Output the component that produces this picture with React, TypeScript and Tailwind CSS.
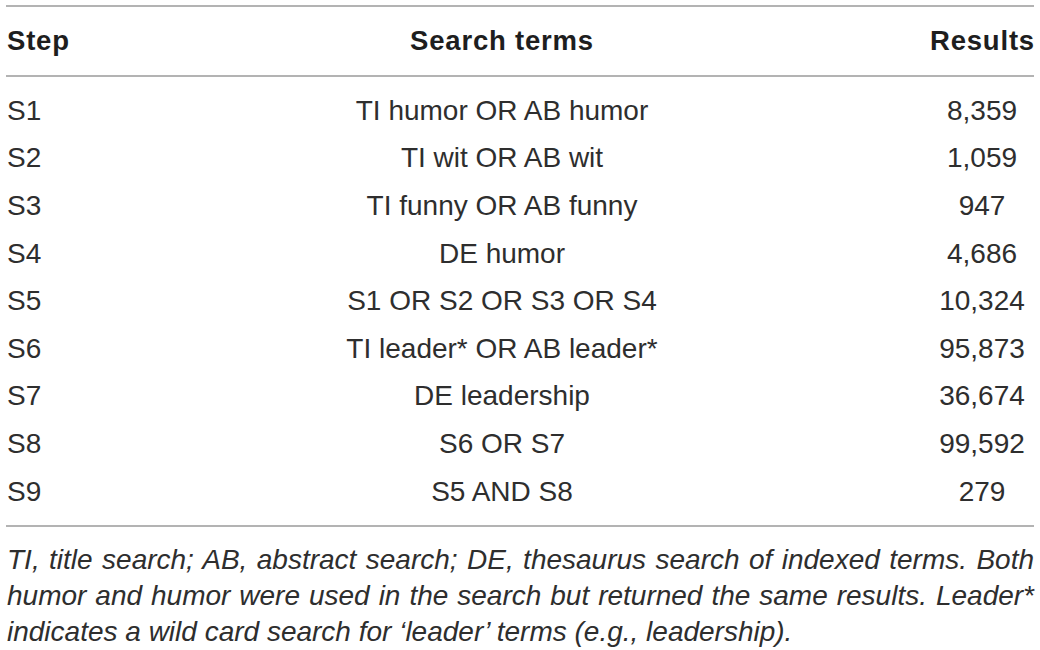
import React from "react";

const rows: [string, string, string][] = [
  ["S1", "TI humor OR AB humor", "8,359"],
  ["S2", "TI wit OR AB wit", "1,059"],
  ["S3", "TI funny OR AB funny", "947"],
  ["S4", "DE humor", "4,686"],
  ["S5", "S1 OR S2 OR S3 OR S4", "10,324"],
  ["S6", "TI leader* OR AB leader*", "95,873"],
  ["S7", "DE leadership", "36,674"],
  ["S8", "S6 OR S7", "99,592"],
  ["S9", "S5 AND S8", "279"],
];

export default function App() {
  return (
    <div
      className="w-[1040px] h-[650px] bg-white px-[6px] pt-[5px] overflow-hidden text-[#2e2e2e]"
      style={{ fontFamily: '"Liberation Sans", Arial, sans-serif' }}
    >
      <div className="border-t-2 border-[#b3b3b3]">
        <div className="grid grid-cols-[68px_1fr_104px] h-[70px] items-center border-b-2 border-[#b3b3b3] text-[27.5px] font-bold tracking-[0.8px] text-[#1e1e1e]">
          <div className="pl-[1px]">Step</div>
          <div className="text-center">Search terms</div>
          <div className="text-center">Results</div>
        </div>
        <div className="py-[10px] border-b-2 border-[#b3b3b3]">
          {rows.map(([s, t, r]) => (
            <div
              key={s}
              className="grid grid-cols-[68px_1fr_104px] h-[47.6px] items-center text-[28px]"
            >
              <div className="pl-[1px]">{s}</div>
              <div className="text-center">{t}</div>
              <div className="text-center">{r}</div>
            </div>
          ))}
        </div>
        <div className="pt-[15px] pl-[1px] italic text-[28px] leading-[36px]">
          <div className="[text-align-last:justify] text-justify">
            TI, title search; AB, abstract search; DE, thesaurus search of indexed terms. Both
          </div>
          <div className="[text-align-last:justify] text-justify">
            humor and humor were used in the search but returned the same results. Leader*
          </div>
          <div>indicates a wild card search for ‘leader’ terms (e.g., leadership).</div>
        </div>
      </div>
    </div>
  );
}
